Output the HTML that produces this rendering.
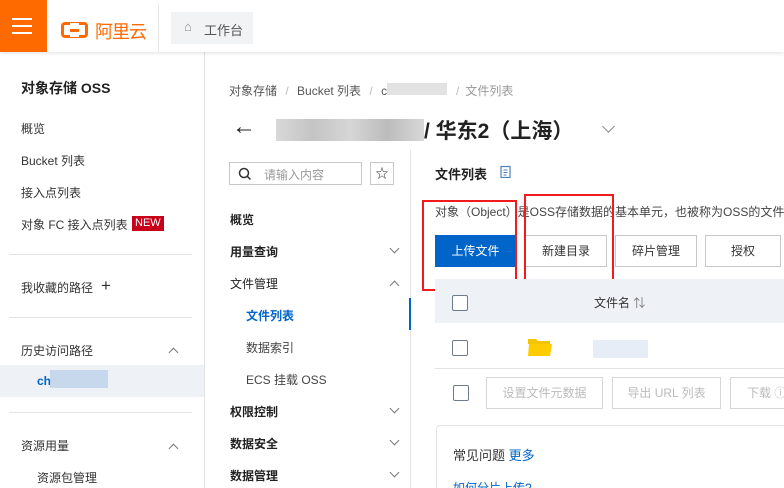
<!DOCTYPE html>
<html><head><meta charset="utf-8"><style>
*{margin:0;padding:0;box-sizing:border-box}
html,body{width:784px;height:488px;overflow:hidden}
body{background:#fff;font-family:"Liberation Sans","Noto Sans CJK SC",sans-serif;color:#333;font-size:12px;position:relative}
.a{position:absolute;white-space:nowrap}
.hdr{position:absolute;left:0;top:0;width:784px;height:52px;background:#fff;box-shadow:0 1px 4px rgba(0,0,0,.12);z-index:2}
.btn{position:absolute;height:32px;border:1px solid #c8c8c8;background:#fff;text-align:center;line-height:30px;font-size:12px;color:#333}
.cb{position:absolute;width:16px;height:16px;border:1px solid #6c7a8c;border-radius:2px;background:#fff}
.chev{position:absolute;width:7px;height:7px;border-right:1px solid #777;border-bottom:1px solid #777}
.dn{transform:rotate(45deg)}.up{transform:rotate(-135deg)}
.hr{position:absolute;height:1px;background:#e3e3e3}
</style></head><body>
<div class="hdr">
 <div class="a" style="left:0;top:0;width:47px;height:52px;background:#ff6a00"></div>
 <div class="a" style="left:12px;top:18px;width:20px;height:2px;background:#fff"></div>
 <div class="a" style="left:12px;top:25px;width:20px;height:2px;background:#fff"></div>
 <div class="a" style="left:12px;top:32px;width:20px;height:2px;background:#fff"></div>
 <div class="a" style="left:61px;top:22px;width:27px;height:16px;border:3px solid #ff6a00;border-radius:4px"></div>
 <div class="a" style="left:70px;top:23px;width:9px;height:14px;background:#fff"></div>
 <div class="a" style="left:70px;top:29px;width:9px;height:2.5px;background:#ff6a00"></div>
 <div class="a" style="left:95px;top:18px;font-size:18px;color:#ff6a00;letter-spacing:-1px">阿里云</div>
 <div class="a" style="left:158px;top:3px;width:1px;height:49px;background:#e8e8e8"></div>
 <div class="a" style="left:171px;top:12px;width:82px;height:32px;background:#f2f3f5"></div>
 <div class="a" style="left:184px;top:19px;font-size:13px;color:#888">⌂</div>
 <div class="a" style="left:204px;top:20px;font-size:13px;color:#555">工作台</div>
</div>
<div class="a" style="left:204px;top:52px;width:1px;height:436px;background:#e3e3e3"></div>
<div class="a" style="left:21px;top:78px;font-size:14px;font-weight:bold;color:#222">对象存储 OSS</div>
<div class="a" style="left:21px;top:120px">概览</div>
<div class="a" style="left:21px;top:152px">Bucket 列表</div>
<div class="a" style="left:21px;top:184px">接入点列表</div>
<div class="a" style="left:21px;top:216px">对象 FC 接入点列表</div>
<div class="a" style="left:132px;top:216px;background:#c8001a;color:#fff;font-size:11px;padding:0 3px;line-height:15px">NEW</div>
<div class="hr" style="left:9px;top:254px;width:183px"></div>
<div class="a" style="left:21px;top:279px">我收藏的路径</div>
<div class="a" style="left:101px;top:276px;font-size:17px;color:#333;font-weight:300">+</div>
<div class="hr" style="left:9px;top:317px;width:183px"></div>
<div class="a" style="left:21px;top:342px">历史访问路径</div>
<div class="chev up" style="left:170px;top:349px"></div>
<div class="a" style="left:0;top:365px;width:204px;height:32px;background:#eef1f6"></div>
<div class="a" style="left:37px;top:374px;color:#0064c8;font-weight:bold">ch</div>
<div class="a" style="left:50px;top:370px;width:58px;height:18px;background:#b8cde8;opacity:.7"></div>
<div class="hr" style="left:9px;top:412px;width:183px"></div>
<div class="a" style="left:21px;top:437px">资源用量</div>
<div class="chev up" style="left:170px;top:445px"></div>
<div class="a" style="left:37px;top:469px">资源包管理</div>
<div class="a" style="left:229px;top:82px;color:#555">对象存储 <span style="color:#bbb;margin:0 5px">/</span> Bucket 列表 <span style="color:#bbb;margin:0 5px">/</span> c</div>
<div class="a" style="left:387px;top:83px;width:60px;height:12px;background:#e2e2e2"></div>
<div class="a" style="left:456px;top:82px;color:#999"><span style="color:#bbb;margin-right:6px">/</span>文件列表</div>
<div class="a" style="left:232px;top:114px;font-size:24px;color:#222;line-height:26px">←</div>
<div class="a" style="left:276px;top:119px;width:148px;height:22px;background:linear-gradient(90deg,#d8d8d8,#c4c4c4,#d6d6d6,#bcbcbc,#d8d8d8)"></div>
<div class="a" style="left:424px;top:115px;font-size:21px;font-weight:bold;color:#222">/ 华东2（上海）</div>
<div class="chev dn" style="left:604px;top:122px;width:9px;height:9px;border-color:#888"></div>
<div class="a" style="left:229px;top:162px;width:133px;height:23px;border:1px solid #c8c8c8"></div>
<svg class="a" style="left:238px;top:167px" width="14" height="14" viewBox="0 0 14 14"><circle cx="6" cy="6" r="4.5" fill="none" stroke="#333" stroke-width="1.5"/><path d="M9.3 9.3L12.5 12.5" stroke="#333" stroke-width="1.5"/></svg>
<div class="a" style="left:264px;top:166px;color:#999">请输入内容</div>
<div class="a" style="left:370px;top:162px;width:24px;height:23px;border:1px solid #c8c8c8;text-align:center;line-height:21px;font-size:13px">☆</div>
<div class="a" style="left:410px;top:150px;width:1px;height:338px;background:#e3e3e3"></div>
<div class="a" style="left:409px;top:298px;width:2px;height:32px;background:#0064c8"></div>
<div class="a" style="left:230px;top:211px;font-weight:bold;color:#222">概览</div>
<div class="a" style="left:230px;top:243px;font-weight:bold;color:#222">用量查询</div><div class="chev dn" style="left:391px;top:245px"></div>
<div class="a" style="left:230px;top:275px;color:#222">文件管理</div><div class="chev up" style="left:391px;top:282px"></div>
<div class="a" style="left:246px;top:307px;font-weight:bold;color:#0064c8">文件列表</div>
<div class="a" style="left:246px;top:339px;color:#444">数据索引</div>
<div class="a" style="left:246px;top:371px;color:#444">ECS 挂载 OSS</div>
<div class="a" style="left:230px;top:403px;font-weight:bold;color:#222">权限控制</div><div class="chev dn" style="left:391px;top:405px"></div>
<div class="a" style="left:230px;top:435px;font-weight:bold;color:#222">数据安全</div><div class="chev dn" style="left:391px;top:437px"></div>
<div class="a" style="left:230px;top:467px;font-weight:bold;color:#222">数据管理</div><div class="chev dn" style="left:391px;top:469px"></div>
<div class="a" style="left:435px;top:164px;font-weight:bold;color:#222;font-size:13px">文件列表</div>
<svg class="a" style="left:500px;top:165px" width="11" height="13" viewBox="0 0 11 13"><rect x="1" y="1.5" width="9" height="11" fill="none" stroke="#4a7fc0" stroke-width="1.2"/><path d="M3.5 5h4M3.5 7.5h4M3.5 10h3" stroke="#4a7fc0"/></svg>
<div class="a" style="left:435px;top:203px;color:#444">对象（Object）是OSS存储数据的基本单元，也被称为OSS的文件。</div>
<div class="btn" style="left:435px;top:235px;width:81px;background:#0064c8;border-color:#0064c8;color:#fff">上传文件</div>
<div class="btn" style="left:525px;top:235px;width:82px">新建目录</div>
<div class="btn" style="left:615px;top:235px;width:82px">碎片管理</div>
<div class="btn" style="left:705px;top:235px;width:76px">授权</div>
<div class="a" style="left:422px;top:200px;width:95px;height:91px;border:2px solid #f21b1b"></div>
<div class="a" style="left:524px;top:194px;width:90px;height:95px;border:2px solid #f21b1b"></div>
<div class="a" style="left:435px;top:279px;width:349px;height:44px;background:#eef1f6"></div>
<div class="cb" style="left:452px;top:295px"></div>
<div class="a" style="left:594px;top:294px;color:#333">文件名 <span style="color:#777">⇅</span></div>
<div class="cb" style="left:452px;top:340px"></div>
<svg class="a" style="left:527px;top:336px" width="26" height="21" viewBox="0 0 26 21"><path d="M1 3h8l2 2h12v3H1z" fill="#f5c400"/><path d="M2 8h23l-2 12H1z" fill="#ffcc00"/></svg>
<div class="a" style="left:593px;top:340px;width:55px;height:18px;background:#e6edf7"></div>
<div class="hr" style="left:435px;top:368px;width:349px"></div>
<div class="cb" style="left:453px;top:385px"></div>
<div class="btn" style="left:486px;top:377px;width:117px;color:#bbb;border-color:#d6d6d6">设置文件元数据</div>
<div class="btn" style="left:612px;top:377px;width:109px;color:#bbb;border-color:#d6d6d6">导出 URL 列表</div>
<div class="btn" style="left:730px;top:377px;width:70px;color:#bbb;border-color:#d6d6d6;text-align:left;padding-left:16px">下载 ⓘ</div>
<div class="a" style="left:436px;top:425px;width:360px;height:80px;border:1px solid #e3e3e3;border-radius:4px"></div>
<div class="a" style="left:453px;top:445px;font-size:13px;color:#333">常见问题 <span style="color:#0064c8">更多</span></div>
<div class="a" style="left:453px;top:479px;color:#0064c8">如何分片上传?</div>
</body></html>
